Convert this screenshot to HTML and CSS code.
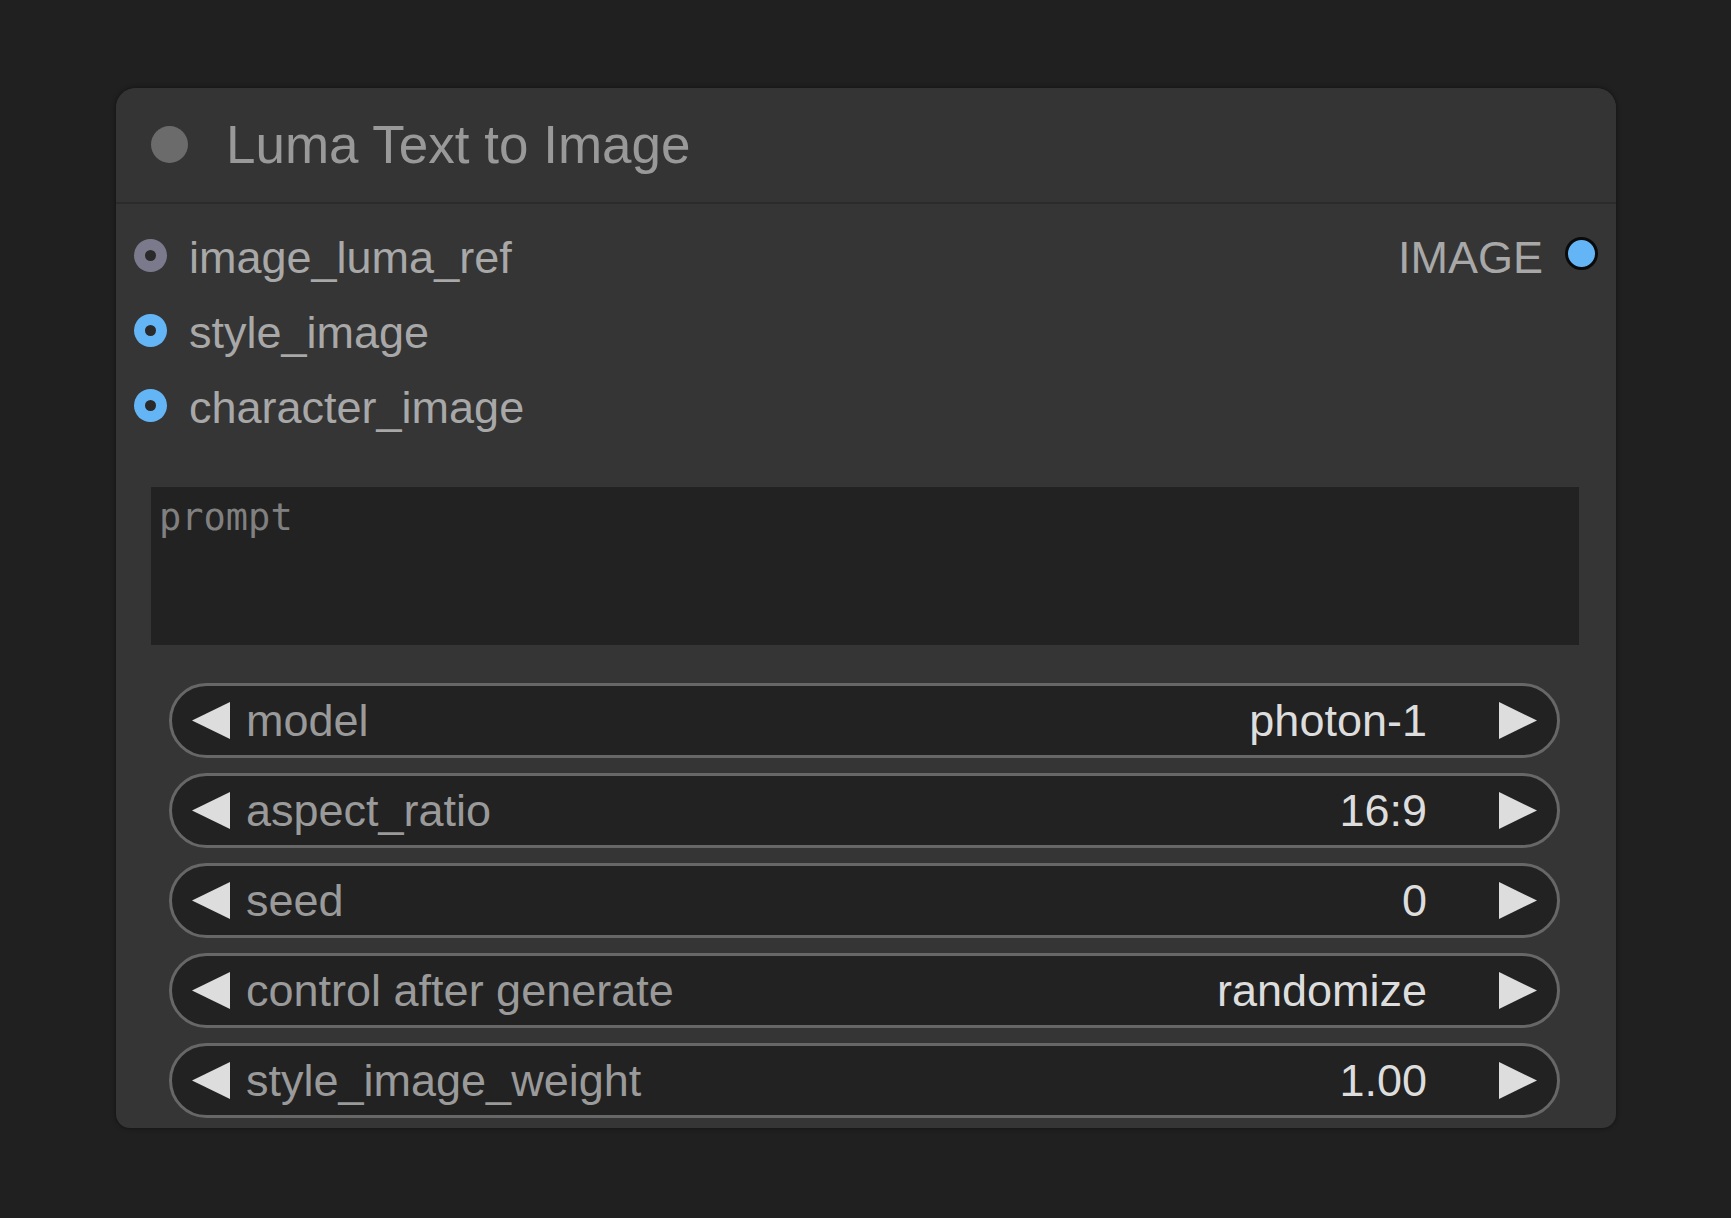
FILE: index.html
```html
<!DOCTYPE html>
<html>
<head>
<meta charset="utf-8">
<title>Luma Text to Image</title>
<link rel="stylesheet" href="styles.css">
</head>
<body>
<div class="node">
  <div class="node-title">
    <span class="title-dot"></span>
    <span class="title-text">Luma Text to Image</span>
  </div>
  <div class="node-body">
    <div class="slots">
      <div class="slot-row">
        <div class="slot-in"><span class="socket socket-grey"></span><span class="slot-label">image_luma_ref</span></div>
        <div class="slot-out"><span class="slot-label">IMAGE</span><span class="socket-out"></span></div>
      </div>
      <div class="slot-row">
        <div class="slot-in"><span class="socket socket-blue"></span><span class="slot-label">style_image</span></div>
      </div>
      <div class="slot-row">
        <div class="slot-in"><span class="socket socket-blue"></span><span class="slot-label">character_image</span></div>
      </div>
    </div>
    <div class="prompt">prompt</div>
    <div class="widgets">
      <div class="combo">
        <svg class="arrow" viewBox="0 0 38 37"><polygon points="0,18.5 38,0 38,37"/></svg>
        <span class="combo-label">model</span>
        <span class="combo-value">photon-1</span>
        <svg class="arrow" viewBox="0 0 38 37"><polygon points="38,18.5 0,0 0,37"/></svg>
      </div>
      <div class="combo">
        <svg class="arrow" viewBox="0 0 38 37"><polygon points="0,18.5 38,0 38,37"/></svg>
        <span class="combo-label">aspect_ratio</span>
        <span class="combo-value">16:9</span>
        <svg class="arrow" viewBox="0 0 38 37"><polygon points="38,18.5 0,0 0,37"/></svg>
      </div>
      <div class="combo">
        <svg class="arrow" viewBox="0 0 38 37"><polygon points="0,18.5 38,0 38,37"/></svg>
        <span class="combo-label">seed</span>
        <span class="combo-value">0</span>
        <svg class="arrow" viewBox="0 0 38 37"><polygon points="38,18.5 0,0 0,37"/></svg>
      </div>
      <div class="combo">
        <svg class="arrow" viewBox="0 0 38 37"><polygon points="0,18.5 38,0 38,37"/></svg>
        <span class="combo-label">control after generate</span>
        <span class="combo-value">randomize</span>
        <svg class="arrow" viewBox="0 0 38 37"><polygon points="38,18.5 0,0 0,37"/></svg>
      </div>
      <div class="combo">
        <svg class="arrow" viewBox="0 0 38 37"><polygon points="0,18.5 38,0 38,37"/></svg>
        <span class="combo-label">style_image_weight</span>
        <span class="combo-value">1.00</span>
        <svg class="arrow" viewBox="0 0 38 37"><polygon points="38,18.5 0,0 0,37"/></svg>
      </div>
    </div>
  </div>
</div>
</body>
</html>
```

FILE: styles.css
```css
* { box-sizing: border-box; }

html, body {
  margin: 0;
  padding: 0;
  background: #202020;
}

body {
  padding: 88px 0 0 116px;
  font-family: "Liberation Sans", Arial, sans-serif;
  height: 1218px;
  overflow: hidden;
}

.node {
  width: 1500px;
  height: 1040px;
  background: #353535;
  border-radius: 20px 20px 14px 14px;
  box-shadow: 0 0 4px 1px rgba(0, 0, 0, 0.35);
  display: flex;
  flex-direction: column;
}

.node-title {
  height: 116px;
  display: flex;
  align-items: center;
  padding-left: 35px;
  padding-bottom: 2px;
  border-bottom: 2px solid #2b2b2b;
  background: #343434;
  border-radius: 20px 20px 0 0;
}

.title-dot {
  width: 37px;
  height: 37px;
  border-radius: 50%;
  background: #6b6b6b;
  flex: none;
}

.title-text {
  margin-left: 38px;
  font-size: 53px;
  color: #999999;
  line-height: 1;
}

.node-body {
  display: flex;
  flex-direction: column;
  padding-top: 14px;
}

.slots {
  display: flex;
  flex-direction: column;
}

.slot-row {
  height: 75px;
  display: flex;
  align-items: center;
  justify-content: space-between;
  padding-left: 18px;
  padding-right: 18px;
}

.slot-in, .slot-out {
  display: flex;
  align-items: center;
}

.slot-label {
  font-size: 45px;
  color: #a8a8a8;
  line-height: 1;
  padding-top: 4px;
}

.slot-in .slot-label {
  margin-left: 22px;
}

.socket {
  width: 33px;
  height: 33px;
  border-radius: 50%;
  display: flex;
  align-items: center;
  justify-content: center;
  flex: none;
}

.socket::after {
  content: "";
  width: 11px;
  height: 11px;
  border-radius: 50%;
  background: #2a2a2a;
}

.socket-grey { background: #7a7a8c; }
.socket-blue { background: #64b5f6; }

.socket-out {
  width: 33px;
  height: 33px;
  border-radius: 50%;
  background: #64b5f6;
  border: 3px solid #0a0a0a;
  margin-left: 22px;
  margin-top: -4px;
  flex: none;
}

.prompt {
  margin: 44px 37px 0 35px;
  height: 158px;
  background: #222222;
  font-family: "DejaVu Sans Mono", "Liberation Mono", monospace;
  font-size: 37px;
  color: #808080;
  padding: 9px 0 0 8px;
  line-height: 1.2;
}

.widgets {
  margin: 38px 56px 0 53px;
  display: flex;
  flex-direction: column;
  gap: 15px;
}

.combo {
  height: 75px;
  border: 3px solid #676767;
  border-radius: 40px;
  background: #222222;
  display: flex;
  align-items: center;
  padding: 0 20px;
}

.arrow {
  width: 38px;
  height: 37px;
  fill: #dddddd;
  flex: none;
}

.combo-label {
  margin-left: 16px;
  font-size: 45px;
  color: #9a9a9a;
  line-height: 1;
  flex: 1;
}

.combo-value {
  font-size: 45px;
  color: #dddddd;
  line-height: 1;
  margin-right: 72px;
}
```
